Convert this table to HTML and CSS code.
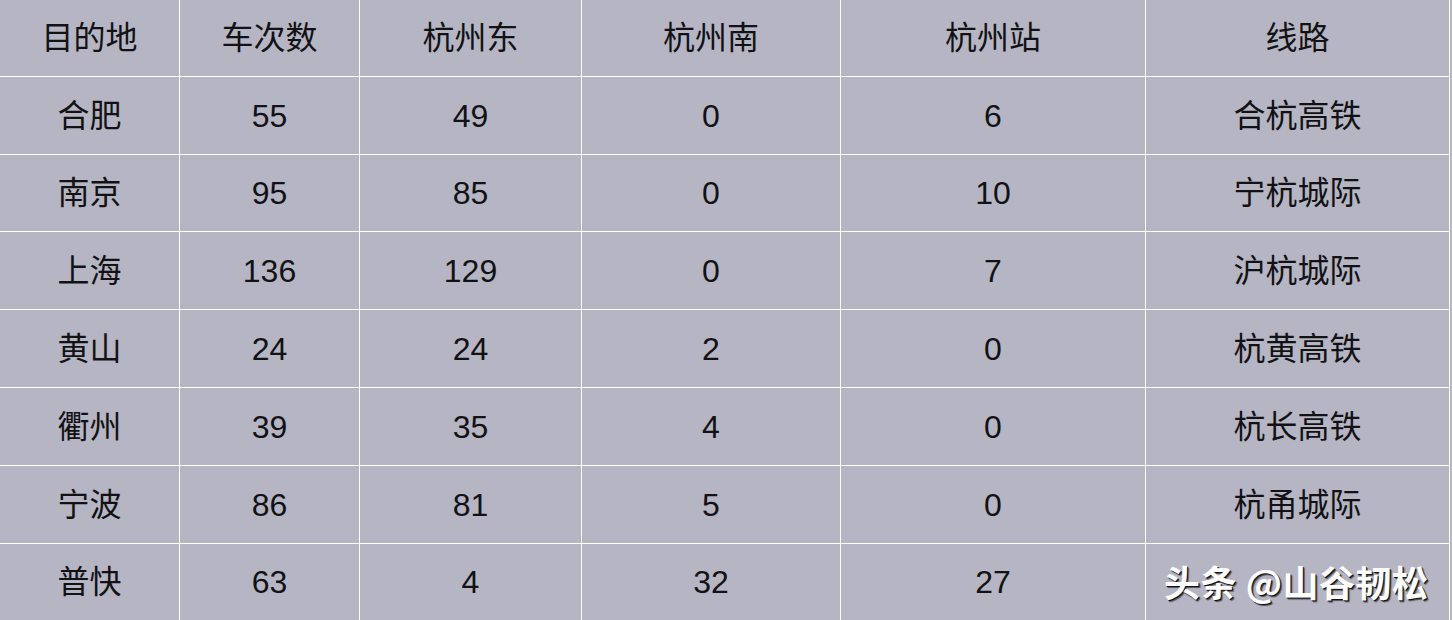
FILE: index.html
```html
<!DOCTYPE html>
<html lang="zh-CN">
<head>
<meta charset="utf-8">
<title>杭州出发车次</title>
<link rel="stylesheet" href="styles.css">
</head>
<body>
<div class="page">
  <div class="grid">
    <div class="cell">目的地</div><div class="cell">车次数</div><div class="cell">杭州东</div><div class="cell">杭州南</div><div class="cell">杭州站</div><div class="cell">线路</div>
    <div class="cell">合肥</div><div class="cell">55</div><div class="cell">49</div><div class="cell">0</div><div class="cell">6</div><div class="cell">合杭高铁</div>
    <div class="cell">南京</div><div class="cell">95</div><div class="cell">85</div><div class="cell">0</div><div class="cell">10</div><div class="cell">宁杭城际</div>
    <div class="cell">上海</div><div class="cell">136</div><div class="cell">129</div><div class="cell">0</div><div class="cell">7</div><div class="cell">沪杭城际</div>
    <div class="cell">黄山</div><div class="cell">24</div><div class="cell">24</div><div class="cell">2</div><div class="cell">0</div><div class="cell">杭黄高铁</div>
    <div class="cell">衢州</div><div class="cell">39</div><div class="cell">35</div><div class="cell">4</div><div class="cell">0</div><div class="cell">杭长高铁</div>
    <div class="cell">宁波</div><div class="cell">86</div><div class="cell">81</div><div class="cell">5</div><div class="cell">0</div><div class="cell">杭甬城际</div>
    <div class="cell">普快</div><div class="cell">63</div><div class="cell">4</div><div class="cell">32</div><div class="cell">27</div><div class="cell"></div>
  </div>
  <div class="watermark">头条 @山谷韧松</div>
</div>
</body>
</html>
```

FILE: styles.css
```css
html, body {
  margin: 0;
  padding: 0;
  background: #b5b5c4;
}
.page {
  position: relative;
  width: 1452px;
  height: 620px;
  overflow: hidden;
  background: #b5b5c4;
}
.grid {
  display: grid;
  grid-template-columns: 179px 179px 221px 258px 304px 303px;
  grid-template-rows: 76px 77px 76px 77px 77px 77px 77px 76px;
  column-gap: 1px;
  row-gap: 1px;
  width: 1449px;
  background: #ffffff;
  border-right: 1px solid #ffffff;
}
.cell {
  background: #b5b5c4;
  display: flex;
  align-items: center;
  justify-content: center;
  font-family: "Liberation Sans", "Noto Sans CJK SC", sans-serif;
  font-size: 32px;
  color: #121214;
  line-height: 1;
}
.watermark {
  position: absolute;
  left: 1164px;
  top: 561px;
  font-family: "Noto Sans CJK SC", sans-serif;
  font-size: 36px;
  font-weight: 700;
  line-height: 40px;
  color: #ffffff;
  letter-spacing: 0.5px;
  text-shadow: 1px 1px 0 #111, 2px 2px 1px rgba(0,0,0,0.55);
  white-space: nowrap;
}
```
